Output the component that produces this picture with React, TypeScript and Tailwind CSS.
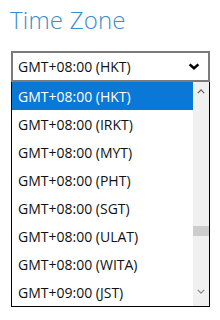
const zones = [
  'GMT+08:00 (HKT)',
  'GMT+08:00 (IRKT)',
  'GMT+08:00 (MYT)',
  'GMT+08:00 (PHT)',
  'GMT+08:00 (SGT)',
  'GMT+08:00 (ULAT)',
  'GMT+08:00 (WITA)',
  'GMT+09:00 (JST)',
];

function Chevron({ up, className }: { up?: boolean; className?: string }) {
  return (
    <svg viewBox="0 0 10 6" className={className} aria-hidden="true">
      <path
        d={up ? 'M1 5L5 1L9 5' : 'M1 1L5 5L9 1'}
        fill="none"
        stroke="currentColor"
        strokeWidth="1.6"
      />
    </svg>
  );
}

export default function App() {
  return (
    <div className="h-[320px] w-[220px] bg-white font-['Open_Sans',sans-serif]">
      <div className="pl-[10px] pt-[3px]">
        <h1 className="text-[24px] font-light leading-[33px] tracking-[0.2px] text-[#3c8dc8]">
          Time Zone
        </h1>
      </div>

      <div className="mx-[11px] mt-[15px] w-[199px]">
        <div className="flex h-[31px] items-center justify-between border-2 border-[#7b7b7b] bg-white pl-[5px] pr-[8px] text-[14px] text-[#111]">
          <span>GMT+08:00 (HKT)</span>
          <svg viewBox="0 0 13 8" className="h-[7px] w-[12px]" aria-hidden="true">
            <path d="M1.5 1.5L6.5 6L11.5 1.5" fill="none" stroke="#000" strokeWidth="2.8" />
          </svg>
        </div>

        <div className="flex border border-t-0 border-black">
          <div className="flex-1">
            {zones.map((z, i) => (
              <div
                key={z}
                className={
                  'flex h-[28px] items-center pl-[6px] text-[14px] ' +
                  (i === 0 ? 'bg-[#0a78d7] text-white' : 'text-[#111]')
                }
              >
                {z}
              </div>
            ))}
          </div>
          <div className="flex w-[16px] flex-col items-center bg-[#f0f0f0]">
            <Chevron up className="mt-[7px] h-[5px] w-[8px] text-[#606060]" />
            <div className="mt-[132px] h-[10px] w-full bg-[#cdcdcd]" />
            <Chevron className="mt-[53px] h-[5px] w-[8px] text-[#8a8a8a]" />
          </div>
        </div>
      </div>
    </div>
  );
}
